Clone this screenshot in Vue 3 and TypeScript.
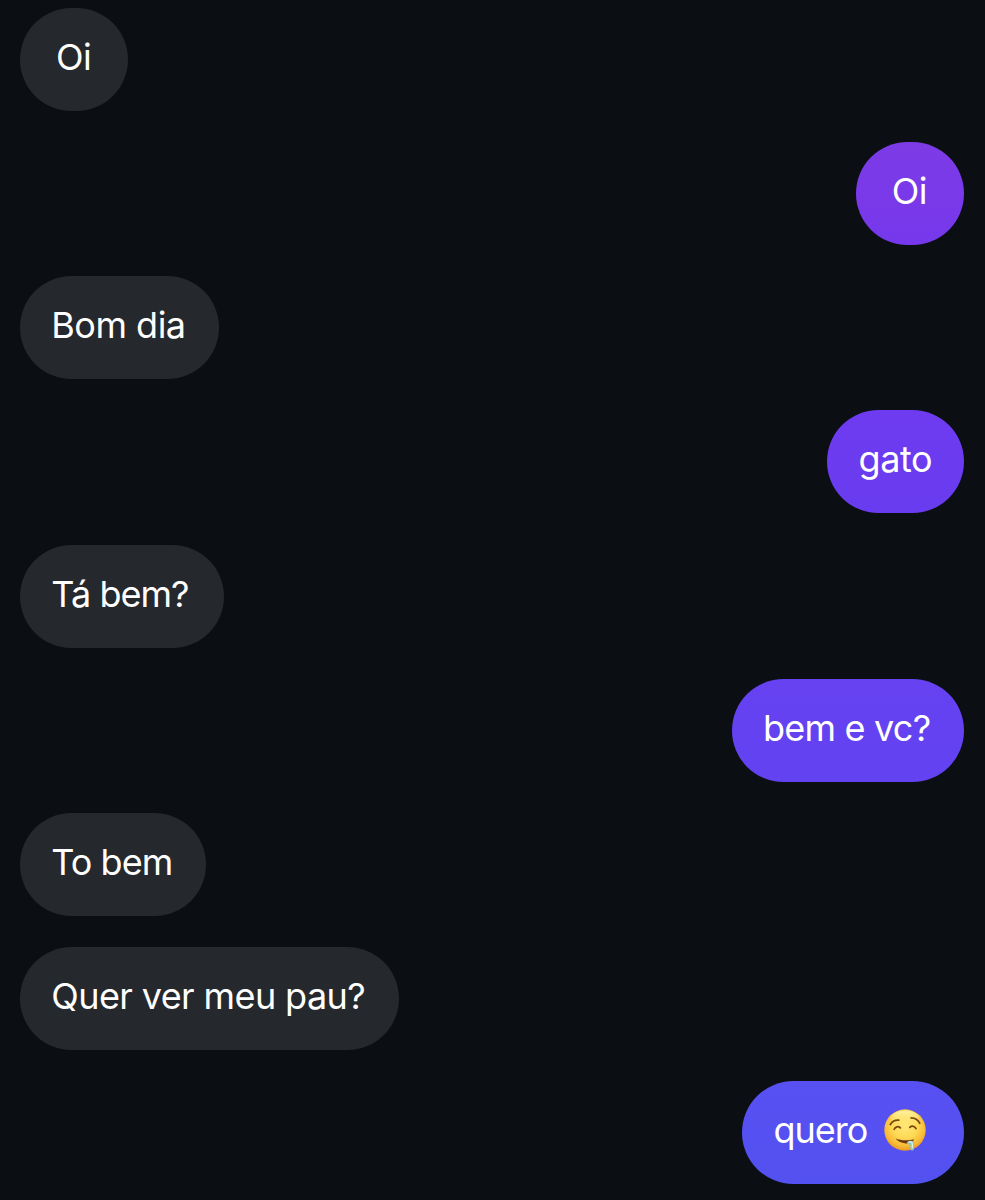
<script setup lang="ts">
interface Message {
  text: string
  side: 'in' | 'out'
  width: number
  spacing: number
  tone?: string
  emoji?: boolean
}

const messages: Message[] = [
  { text: 'Oi', side: 'in', width: 108, spacing: -0.6 },
  { text: 'Oi', side: 'out', width: 108.5, spacing: -0.6, tone: 'violet' },
  { text: 'Bom dia', side: 'in', width: 198.5, spacing: -0.5 },
  { text: 'gato', side: 'out', width: 137, spacing: -0.4, tone: 'purple' },
  { text: 'Tá bem?', side: 'in', width: 203.5, spacing: -0.95 },
  { text: 'bem e vc?', side: 'out', width: 232.5, spacing: -0.78, tone: 'indigo' },
  { text: 'To bem', side: 'in', width: 185.5, spacing: -0.95 },
  { text: 'Quer ver meu pau?', side: 'in', width: 379, spacing: -0.6 },
  { text: 'quero', side: 'out', width: 222, spacing: -1, tone: 'blue', emoji: true },
]
</script>

<template>
  <main class="chat">
    <div
      v-for="(m, i) in messages"
      :key="i"
      class="bubble"
      :class="[m.side, m.tone, { short: m.text === 'Oi' }]"
      :style="{ width: m.width + 'px' }"
    >
      <span class="text" :style="{ letterSpacing: m.spacing + 'px' }">{{ m.text }}</span>
      <svg v-if="m.emoji" class="emoji" viewBox="0 0 42 42" aria-label="🤤">
        <defs>
          <radialGradient id="face" cx=".5" cy=".4" r=".62">
            <stop offset="0" stop-color="#ffe878" />
            <stop offset=".5" stop-color="#fed854" />
            <stop offset=".8" stop-color="#f8b935" />
            <stop offset="1" stop-color="#e59024" />
          </radialGradient>
          <linearGradient id="shine" x1="0" y1="0" x2="0" y2="1">
            <stop offset="0" stop-color="#fff6ae" stop-opacity=".9" />
            <stop offset="1" stop-color="#ffe36b" stop-opacity="0" />
          </linearGradient>
        </defs>
        <circle cx="21" cy="21" r="20.7" fill="url(#face)" />
        <ellipse cx="21" cy="9.5" rx="14" ry="8" fill="url(#shine)" />
        <g fill="none" stroke="#7a480f" stroke-width="1.8" stroke-linecap="round">
          <path d="M6.3 15.5C8 12.4 11 10.9 14.8 11.2" />
          <path d="M27.2 8.9C31 9 34 10.9 35.7 14.2" />
          <path d="M10.2 20.2C11.2 17.6 14.2 16.8 16.4 18.8" />
          <path d="M25.8 18.3C27.8 16.4 30.8 17 32 19.6" />
        </g>
        <path d="M11.5 29.5C16 31.5 24 32 30 30.2C29 34 25 34.8 20.5 34.2C16.4 33.5 13 31.7 11.5 29.5Z" fill="#6c3710" />
        <path d="M23.2 33C25 31.2 28 31.5 30 32.2V39.5C30 42.2 26.4 42.2 26.4 39.5L26.2 35.5C24.5 36 22.7 35 23.2 33Z" fill="#8fc5be" />
        <path d="M24.8 33.2C26.6 32.3 28.3 33 28.3 35V38.8" fill="none" stroke="#e8fbef" stroke-width="1.1" stroke-linecap="round" />
      </svg>
    </div>
  </main>
</template>

<style>
body {
  margin: 0;
  background: #0b0f14;
}
</style>

<style scoped>
.chat {
  box-sizing: border-box;
  height: 1200px;
  padding: 8px 20.8px 0 20px;
  display: flex;
  flex-direction: column;
  gap: 31.15px;
  overflow: hidden;
  background: #0b0f14;
  font-family: Inter, "Liberation Sans", sans-serif;
}
.bubble {
  box-sizing: border-box;
  flex: none;
  height: 103px;
  padding: 0 0 5px 31.3px;
  border-radius: 51.5px;
  display: flex;
  align-items: center;
  color: #fff;
  font-size: 36px;
  line-height: 44px;
  white-space: nowrap;
}
.short {
  padding-left: 36px;
}
.in {
  align-self: flex-start;
  background: #25282d;
}
.out {
  align-self: flex-end;
}
.violet {
  background: linear-gradient(#7d3be6, #7638ec);
}
.purple {
  background: linear-gradient(#6e3bf0, #693cef);
}
.indigo {
  background: linear-gradient(#6642f1, #6242f1);
}
.blue {
  background: linear-gradient(#5850f2, #5351f0);
}
.emoji {
  width: 42px;
  height: 42px;
  flex: none;
  margin-left: auto;
  margin-right: 38.5px;
}
</style>
